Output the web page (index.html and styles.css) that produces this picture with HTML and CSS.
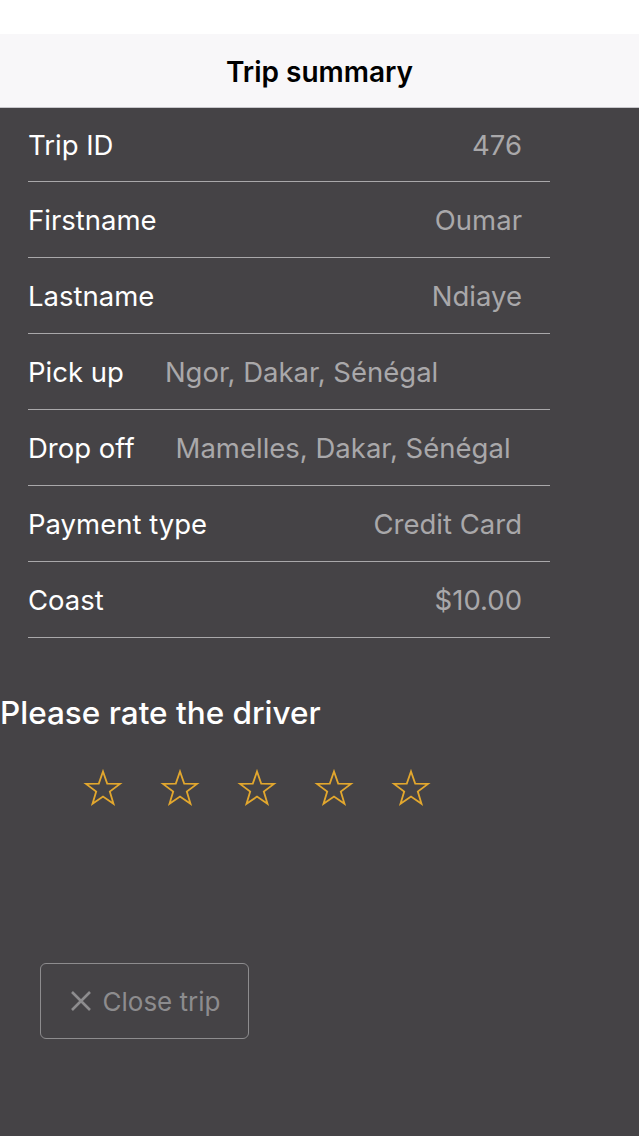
FILE: index.html
```html
<!DOCTYPE html>
<html>
<head>
<meta charset="utf-8">
<link rel="stylesheet" href="styles.css">
</head>
<body>
<div class="status"></div>
<header class="nav">Trip summary</header>
<main class="content">
  <ul class="list">
    <li class="row first"><span class="label">Trip ID</span><span class="value">476</span></li>
    <li class="row"><span class="label">Firstname</span><span class="value">Oumar</span></li>
    <li class="row"><span class="label">Lastname</span><span class="value">Ndiaye</span></li>
    <li class="row"><span class="label">Pick up</span><span class="value inline">Ngor, Dakar, Sénégal</span></li>
    <li class="row"><span class="label">Drop off</span><span class="value inline">Mamelles, Dakar, Sénégal</span></li>
    <li class="row"><span class="label">Payment type</span><span class="value">Credit Card</span></li>
    <li class="row"><span class="label">Coast</span><span class="value">$10.00</span></li>
  </ul>
  <h2 class="rate-title">Please rate the driver</h2>
  <div class="stars">
    <svg class="star" viewBox="0 0 40 40"><path d="M20 3.5 L24.2 15.6 L37 15.9 L26.8 23.6 L30.5 35.8 L20 28.6 L9.5 35.8 L13.2 23.6 L3 15.9 L15.8 15.6 Z"/></svg>
    <svg class="star" viewBox="0 0 40 40"><path d="M20 3.5 L24.2 15.6 L37 15.9 L26.8 23.6 L30.5 35.8 L20 28.6 L9.5 35.8 L13.2 23.6 L3 15.9 L15.8 15.6 Z"/></svg>
    <svg class="star" viewBox="0 0 40 40"><path d="M20 3.5 L24.2 15.6 L37 15.9 L26.8 23.6 L30.5 35.8 L20 28.6 L9.5 35.8 L13.2 23.6 L3 15.9 L15.8 15.6 Z"/></svg>
    <svg class="star" viewBox="0 0 40 40"><path d="M20 3.5 L24.2 15.6 L37 15.9 L26.8 23.6 L30.5 35.8 L20 28.6 L9.5 35.8 L13.2 23.6 L3 15.9 L15.8 15.6 Z"/></svg>
    <svg class="star" viewBox="0 0 40 40"><path d="M20 3.5 L24.2 15.6 L37 15.9 L26.8 23.6 L30.5 35.8 L20 28.6 L9.5 35.8 L13.2 23.6 L3 15.9 L15.8 15.6 Z"/></svg>
  </div>
  <button class="close-btn">
    <svg class="x-icon" viewBox="0 0 24 24"><path d="M3 3 L21 21 M21 3 L3 21"/></svg>
    <span>Close trip</span>
  </button>
</main>
</body>
</html>
```

FILE: styles.css
```css
* { box-sizing: border-box; }
html, body {
  margin: 0;
  padding: 0;
  height: 100%;
}
body {
  font-family: Inter, "Noto Sans", "Liberation Sans", sans-serif;
  background: #454346;
  display: flex;
  flex-direction: column;
  width: 639px;
  min-height: 1136px;
}
.status {
  height: 34px;
  background: #ffffff;
}
.nav {
  height: 74px;
  background: #f8f7f9;
  border-bottom: 1px solid #c8c7cc;
  display: flex;
  align-items: center;
  justify-content: center;
  font-size: 28px;
  font-weight: 600;
  color: #000;
  padding-top: 2px;
}
.content {
  flex: 1;
  background: #454346;
}
.list {
  list-style: none;
  margin: 0;
  padding: 0 89px 0 28px;
}
.row {
  height: 76px;
  display: flex;
  align-items: center;
  border-bottom: 1.5px solid #a9a8aa;
  padding-right: 28px;
  font-size: 27.5px;
}
.row.first {
  height: 74px;
}
.label {
  color: #ffffff;
}
.value {
  color: #a9a8aa;
  margin-left: auto;
}
.value.inline {
  margin-left: 41px;
}
.rate-title {
  margin: 57px 0 0 0;
  font-size: 31.5px;
  font-weight: 500;
  color: #ffffff;
  line-height: 36px;
}
.stars {
  display: flex;
  gap: 37px;
  padding-left: 83px;
  margin-top: 37px;
}
.star {
  width: 40px;
  height: 40px;
  fill: none;
  stroke: #e2a72e;
  stroke-width: 1.8;
  stroke-linejoin: miter;
}
.close-btn {
  margin: 155px 0 0 40px;
  width: 209px;
  height: 76px;
  background: transparent;
  border: 1.5px solid #8d8c8e;
  border-radius: 6px;
  display: flex;
  align-items: center;
  justify-content: center;
  gap: 10px;
  color: #8d8c8e;
  font-family: Inter, "Noto Sans", "Liberation Sans", sans-serif;
  font-size: 26px;
  padding: 0;
}
.x-icon {
  width: 24px;
  height: 24px;
  stroke: #8d8c8e;
  stroke-width: 2.6;
  fill: none;
}
```
